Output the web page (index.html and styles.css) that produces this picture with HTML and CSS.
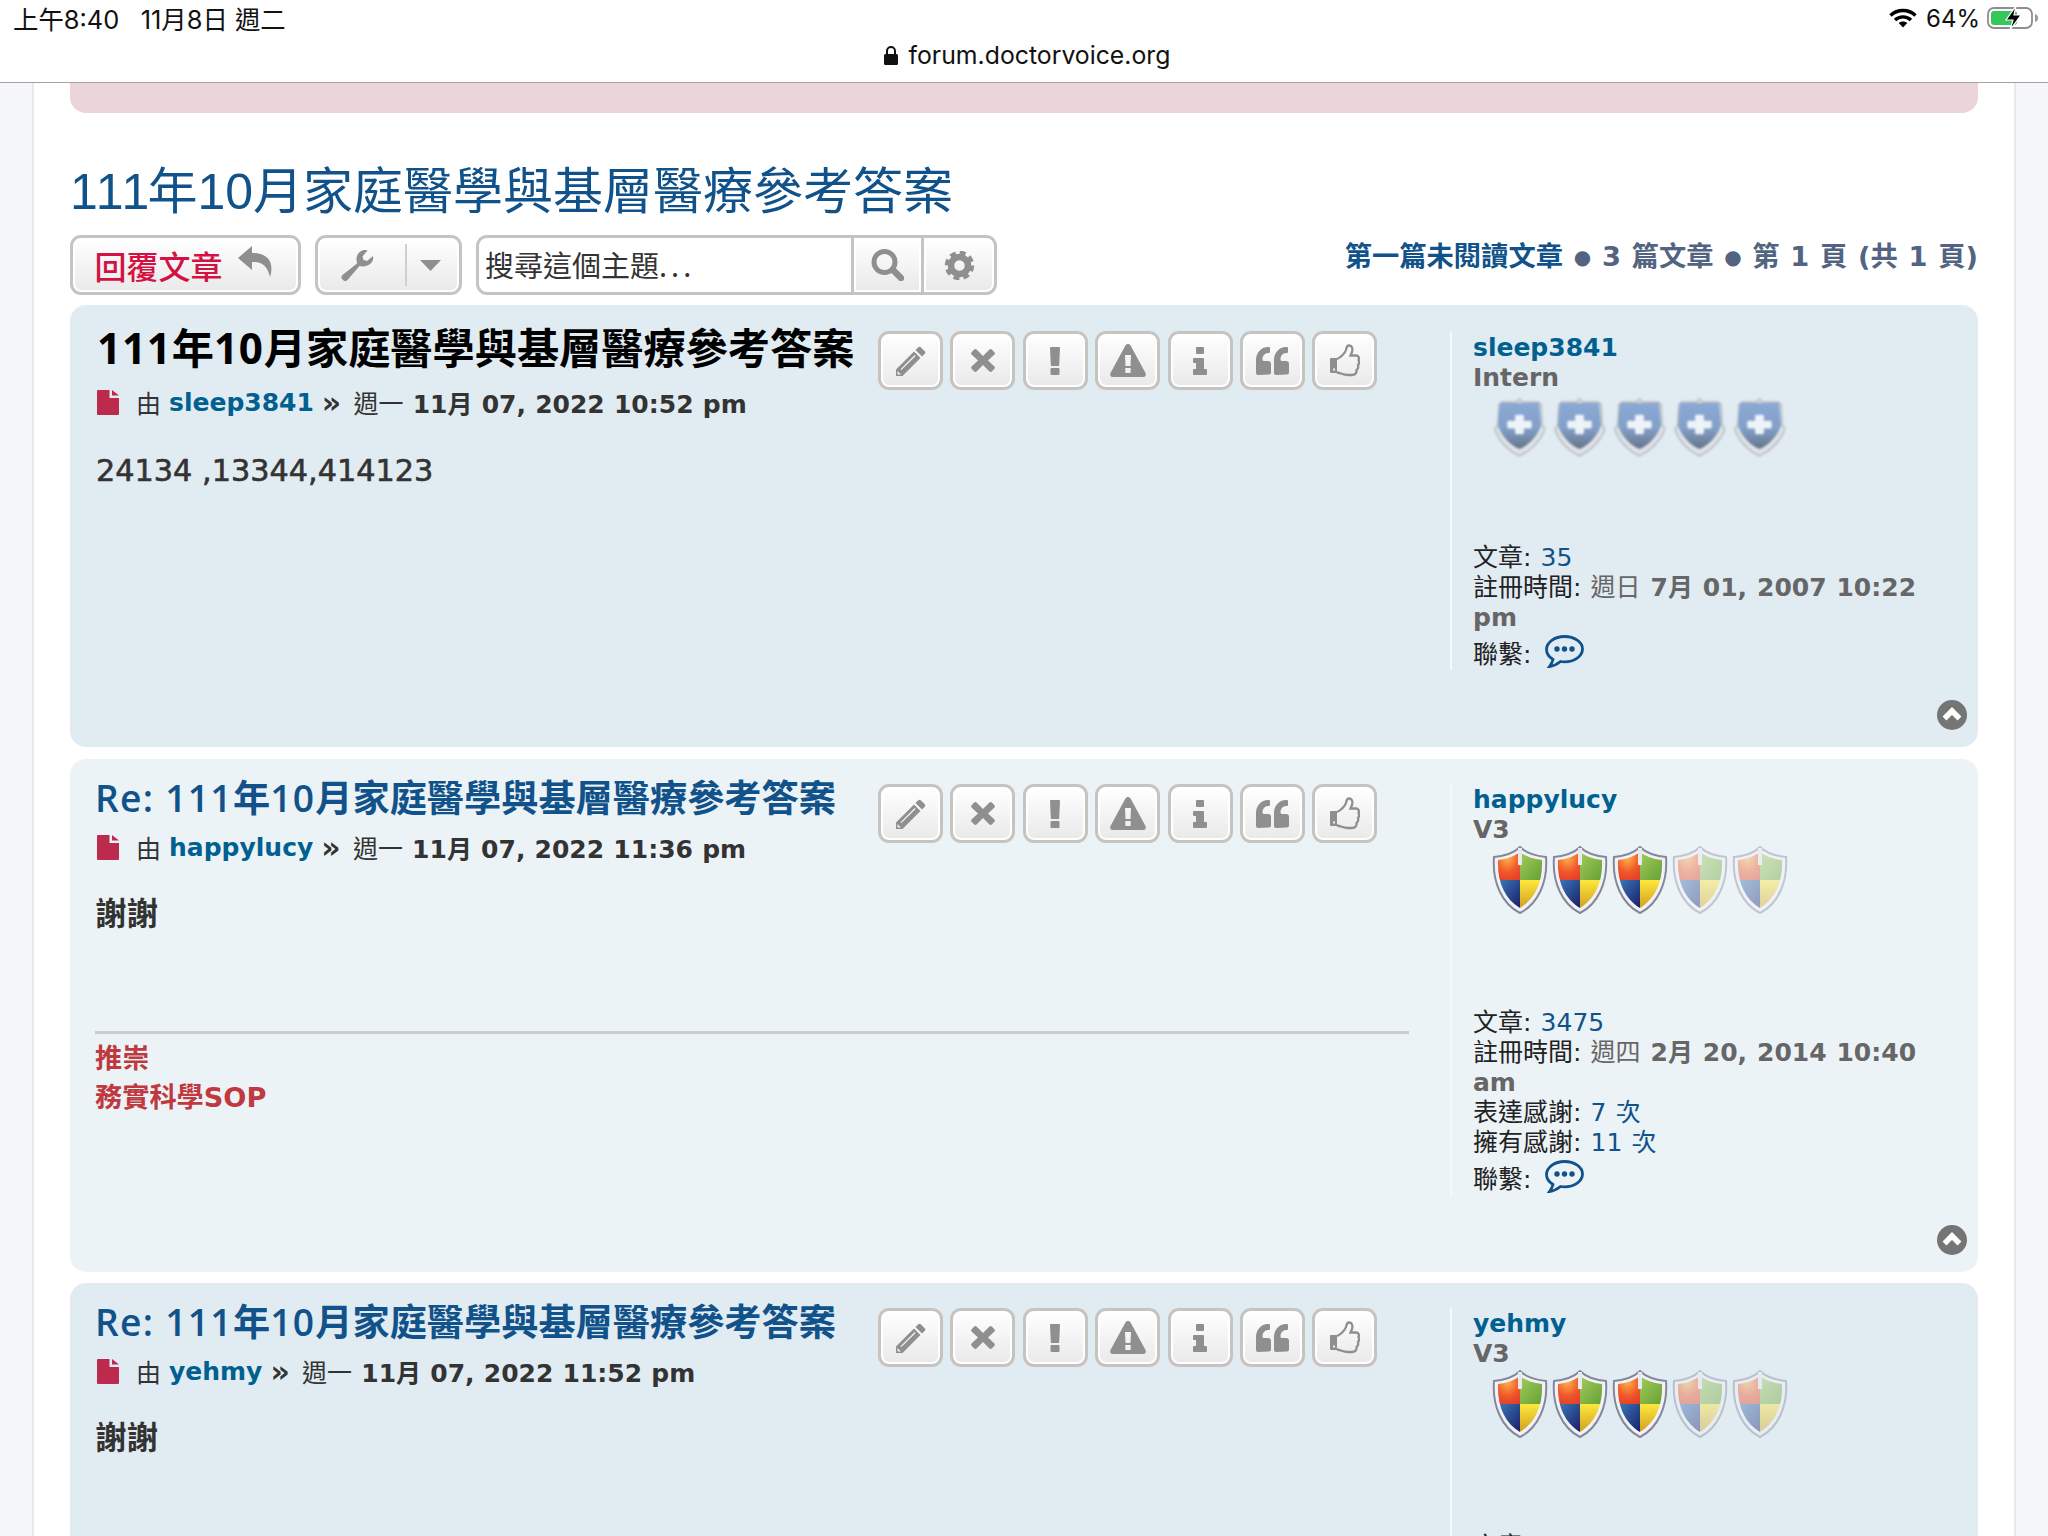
FILE: index.html
```html
<!DOCTYPE html>
<html lang="zh-Hant">
<head>
<meta charset="utf-8">
<title>111年10月家庭醫學與基層醫療參考答案</title>
<link rel="stylesheet" href="styles.css">
</head>
<body>
<svg class="defs" aria-hidden="true">
  <defs>
    <linearGradient id="g-blue" x1="0" y1="0" x2="0" y2="1"><stop offset="0" stop-color="#8aa9d4"/><stop offset=".55" stop-color="#82a0c9"/><stop offset="1" stop-color="#667388"/></linearGradient>
    <radialGradient id="g-red" cx=".55" cy=".35" r=".7"><stop offset="0" stop-color="#fdb04a"/><stop offset=".6" stop-color="#f0582a"/><stop offset="1" stop-color="#e2402a"/></radialGradient>
    <linearGradient id="g-green" x1="0" y1="0" x2="1" y2="1"><stop offset="0" stop-color="#a9d05c"/><stop offset="1" stop-color="#5f9b32"/></linearGradient>
    <linearGradient id="g-navy" x1="0" y1="0" x2="1" y2="1"><stop offset="0" stop-color="#3f85c4"/><stop offset="1" stop-color="#17155f"/></linearGradient>
    <linearGradient id="g-yellow" x1="0" y1="0" x2="0" y2="1"><stop offset="0" stop-color="#fde83c"/><stop offset="1" stop-color="#c9901c"/></linearGradient>
    <clipPath id="c-shield"><path d="M28 6C33 10 41 13 50 14 51 36 43 53 28 62 13 53 5 36 6 14 15 13 23 10 28 6Z"/></clipPath>
    <symbol id="i-pencil" viewBox="0 0 31 30"><path d="M23 1.500a2 2 0 0 1 3 0l3.500 3.500a2 2 0 0 1 0 3L27 10.500 20.500 4z"/><path fill-rule="evenodd" d="M19 5.500l6.500 6.500L7.500 30H1v-6.500zM5.500 23.200l.9.9L20.600 10l-.9-.9zM2.500 25v3.500H6z"/></symbol>
    <symbol id="i-times" viewBox="0 0 24 23"><path d="M3 0.800a2 2 0 0 1 2.800 0L12 7l6.200-6.200a2 2 0 0 1 2.800 0l2.200 2.200a2 2 0 0 1 0 2.800L17 11.500l6.200 5.700a2 2 0 0 1 0 2.800L21 22.200a2 2 0 0 1-2.800 0L12 16l-6.200 6.200a2 2 0 0 1-2.800 0L.8 20a2 2 0 0 1 0-2.800L7 11.500.8 5.800a2 2 0 0 1 0-2.800z"/></symbol>
    <symbol id="i-excl" viewBox="0 0 10 28"><path d="M1 0h8a1 1 0 0 1 1 1l-.8 17a1 1 0 0 1-1 1H1.800a1 1 0 0 1-1-1L0 1a1 1 0 0 1 1-1zM1.500 21h7a1 1 0 0 1 1 1v5a1 1 0 0 1-1 1h-7a1 1 0 0 1-1-1v-5a1 1 0 0 1 1-1z"/></symbol>
    <symbol id="i-warn" viewBox="0 0 36 33"><path fill-rule="evenodd" d="M18 0c1 0 2 .6 2.600 1.600L35.500 29c1 2-.2 4-2.500 4H3c-2.300 0-3.500-2-2.500-4L15.400 1.600C16 .6 17 0 18 0zM15 11l.5 11h5l.5-11zM15.300 24v5h5.400v-5z"/></symbol>
    <symbol id="i-info" viewBox="0 0 14 28"><path d="M4 0h6a1 1 0 0 1 1 1v5a1 1 0 0 1-1 1H4a1 1 0 0 1-1-1V1a1 1 0 0 1 1-1zM1 11h9a1 1 0 0 1 1 1v10h2a1 1 0 0 1 1 1v4a1 1 0 0 1-1 1H1a1 1 0 0 1-1-1v-4a1 1 0 0 1 1-1h2v-6H1a1 1 0 0 1-1-1v-3a1 1 0 0 1 1-1z"/></symbol>
    <symbol id="i-quote" viewBox="0 0 33 28"><path d="M2 28a2 2 0 0 1-2-2V13C0 6 5 0 12 0h1a1 1 0 0 1 1 1v4a1 1 0 0 1-1 1h-1c-3 0-5.500 3-5.500 6v.5c0 .8.700 1.500 1.500 1.500H12a3 3 0 0 1 3 3v8.500a2 2 0 0 1-2 2z"/><path d="M20 28a2 2 0 0 1-2-2V13c0-7 5-13 12-13h1a1 1 0 0 1 1 1v4a1 1 0 0 1-1 1h-1c-3 0-5.500 3-5.500 6v.5c0 .8.700 1.500 1.500 1.500H30a3 3 0 0 1 3 3v8.500a2 2 0 0 1-2 2z"/></symbol>
    <symbol id="i-thumb" viewBox="0 0 30 33"><path fill-rule="evenodd" d="M1 14h6v15H1a1 1 0 0 1-1-1V15a1 1 0 0 1 1-1zM3 24.500v2h2v-2z"/><path class="thumb-line" d="M7 15C11 13.500 15 9 16 6 16.500 3 17 1.500 19 1.500 22 1.500 23 5 22 8L20.500 11.500H26C28.500 11.500 29.500 14 28.500 16 29.500 18 29 20 28 21 28.500 23 28 25 26.500 26 27 29 25 31 22 31H18C14 31 10 29 7 28.500"/></symbol>
    <symbol id="i-reply" viewBox="0 0 35 31"><path d="M14 0 0 12l14 12v-8c10-1 15.500 4 18 15 4-13 0-24-18-24z"/></symbol>
    <symbol id="i-wrench" viewBox="0 0 33 32"><path d="M32 7l-6 5-3.500-1-1-3.500 5-6C20.500-.5 15 5 15.500 11L16 14.500 1.500 26a3 3 0 0 0-.2 4.200l1 1a3 3 0 0 0 4.200-.2L18.500 17C26 19 33.500 14 32 7z"/></symbol>
    <symbol id="i-caret" viewBox="0 0 21 11"><path d="M0 0h21L10.500 11z"/></symbol>
    <symbol id="i-search" viewBox="0 0 33 32"><circle class="glass" cx="13.500" cy="13" r="10.500"/><path class="glass-handle" d="M22 21l8 8"/></symbol>
    <symbol id="i-gear" viewBox="0 0 31 29"><circle class="gear-ring" cx="15.500" cy="14.500" r="8.500"/><circle class="gear-teeth" cx="15.500" cy="14.500" r="12.500"/></symbol>
    <symbol id="i-doc" viewBox="0 0 22 25"><path d="M1 0h11.500v8H22v16a1 1 0 0 1-1 1H1a1 1 0 0 1-1-1V1a1 1 0 0 1 1-1zM15 0l7 5.500h-7z"/></symbol>
    <symbol id="i-chat" viewBox="0 0 39 33"><path class="chat-line" d="M19.500 1.500C9.500 1.500 1.500 7.500 1.500 14.500c0 4 2.500 7.500 6.500 10-.5 2.500-2 5-3.500 7 4-.5 8-2.500 11-5 1.500.3 2.700.4 4 .4 10 0 18-6 18-12.900S29.500 1.500 19.500 1.500z"/><circle cx="12" cy="14" r="2.700"/><circle cx="19.500" cy="14" r="2.700"/><circle cx="27" cy="14" r="2.700"/></symbol>
    <symbol id="i-top" viewBox="0 0 30 30"><circle cx="15" cy="15" r="15"/><path class="top-line" d="M7.500 18.500 15 11l7.500 7.500"/></symbol>
    <symbol id="i-blue" viewBox="0 0 52 60"><path d="M26 1l3 3h16l3 3 1 20 3 5C46 46 36 54 26 59 16 54 6 46 1 32l3-5 1-20 3-3h15z" fill="#dfe3e7" stroke="#b4b7bb" stroke-width="1.500"/><path d="M6 5h40l2 23C44 40 34 49 26 52 18 49 8 40 4 28z" fill="url(#g-blue)"/><path d="M23 17h6a1.500 1.500 0 0 1 1.500 1.500v4.500H37a1.500 1.500 0 0 1 1.500 1.500v5a1.500 1.500 0 0 1-1.500 1.500h-6.500v4.500a1.500 1.500 0 0 1-1.500 1.500h-6a1.500 1.500 0 0 1-1.500-1.500v-4.500H15a1.500 1.500 0 0 1-1.500-1.500v-5a1.500 1.500 0 0 1 1.500-1.500h6.500v-4.500a1.500 1.500 0 0 1 1.500-1.500z" fill="#eef3f8"/></symbol>
    <symbol id="i-win" viewBox="0 0 56 68"><path d="M28 1C34 7 44 10 54 11 56 36 46 58 28 67 10 58 0 36 2 11 12 10 22 7 28 1Z" fill="#f1f2f6" stroke="#85889a" stroke-width="2"/><g clip-path="url(#c-shield)"><rect x="0" y="0" width="28" height="34" fill="url(#g-red)"/><rect x="28" y="0" width="28" height="34" fill="url(#g-green)"/><rect x="0" y="34" width="28" height="34" fill="url(#g-navy)"/><rect x="28" y="34" width="28" height="34" fill="url(#g-yellow)"/></g><path d="M26 2h4v17h-4z" fill="#e8e9ee"/></symbol>
  </defs>
</svg>

<header class="statusbar">
  <div class="status-top">
    <span class="status-time">上午8:40&nbsp;&nbsp; 11月8日 週二</span>
    <span class="status-right">
      <svg class="wifi" viewBox="0 0 28 20"><path d="M1.500 7.500C8.500.8 19.500.8 26.500 7.500M6 12c4.500-4.200 11.500-4.200 16 0"/><path class="wifi-dot" d="M14 19.500l-4.300-4.500c2.400-2 6.200-2 8.600 0z"/></svg>
      <span>64%</span>
      <svg class="battery" viewBox="0 0 52 26"><rect class="bat-shell" x="1" y="3" width="44" height="20" rx="6"/><rect class="bat-fill" x="4" y="6" width="26" height="14" rx="3"/><path class="bat-nub" d="M48 9c2 .5 3 2 3 4s-1 3.500-3 4z"/><path class="bat-bolt" d="M29 1 19 15h7l-3 10 11-15h-7z"/></svg>
    </span>
  </div>
  <div class="status-url">
    <svg class="lock" viewBox="0 0 14 19"><path d="M2 8V5a5 5 0 0 1 10 0v3h.5A1.500 1.500 0 0 1 14 9.500V17.500a1.500 1.500 0 0 1-1.500 1.500h-11A1.500 1.500 0 0 1 0 17.500V9.500A1.500 1.500 0 0 1 1.500 8zM4 8h6V5a3 3 0 0 0-6 0z"/></svg>
    <span>forum.doctorvoice.org</span>
  </div>
</header>

<div class="wrap">
  <div class="notice"></div>
  <h2 class="topic-title"><span class="lat-t">111</span>年10月家庭醫學與基層醫療參考答案</h2>

  <div class="toolbar">
    <div class="tools">
      <a class="btn btn-reply"><span>回覆文章</span><svg class="ic-reply"><use href="#i-reply"/></svg></a>
      <a class="btn btn-tools"><svg class="ic-wrench"><use href="#i-wrench"/></svg><i class="btn-sep"></i><svg class="ic-caret"><use href="#i-caret"/></svg></a>
      <div class="search">
        <span class="search-input">搜尋這個主題<span class="dots">...</span></span>
        <a class="btn btn-search"><svg class="ic-search"><use href="#i-search"/></svg></a>
        <a class="btn btn-gear"><svg class="ic-gear"><use href="#i-gear"/></svg></a>
      </div>
    </div>
    <div class="pagination"><a class="link-strong">第一篇未閱讀文章</a> <span class="bullet">●</span> 3 篇文章 <span class="bullet">●</span> 第 1 頁 (共 1 頁)</div>
  </div>

  <article class="post post-a post-first">
    <div class="post-row">
      <div class="postbody">
        <div class="post-head">
          <div class="post-heading">
            <h3 class="first-title"><span class="lat-b">111</span>年<span class="lat-b">10</span>月家庭醫學與基層醫療參考答案</h3>
            <p class="meta meta-first"><svg class="ic-doc"><use href="#i-doc"/></svg><span class="by">由</span> <a class="uname">sleep3841</a> <b><span class="raquo">»</span> <span class="by">週一</span> 11月 07, 2022 10:52 pm</b></p>
          </div>
          <div class="post-buttons">
            <a class="btn pb"><svg class="ic-pencil"><use href="#i-pencil"/></svg></a>
            <a class="btn pb"><svg class="ic-times"><use href="#i-times"/></svg></a>
            <a class="btn pb"><svg class="ic-excl"><use href="#i-excl"/></svg></a>
            <a class="btn pb"><svg class="ic-warn"><use href="#i-warn"/></svg></a>
            <a class="btn pb"><svg class="ic-info"><use href="#i-info"/></svg></a>
            <a class="btn pb"><svg class="ic-quote"><use href="#i-quote"/></svg></a>
            <a class="btn pb"><svg class="ic-thumb"><use href="#i-thumb"/></svg></a>
          </div>
        </div>
        <div class="content content-num">24134 ,13344,414123</div>
      </div>
      <aside class="profile">
        <a class="uname">sleep3841</a>
        <div class="rank-title">Intern</div>
        <div class="rank rank-blue">
          <svg class="shield-b"><use href="#i-blue"/></svg><svg class="shield-b"><use href="#i-blue"/></svg><svg class="shield-b"><use href="#i-blue"/></svg><svg class="shield-b"><use href="#i-blue"/></svg><svg class="shield-b"><use href="#i-blue"/></svg>
        </div>
        <div class="pf">文章: <a class="val">35</a></div>
        <div class="pf">註冊時間: <b class="muted"><span class="by">週日</span> 7月 01, 2007 10:22 pm</b></div>
        <div class="pf pf-contact">聯繫: <svg class="ic-chat"><use href="#i-chat"/></svg></div>
      </aside>
    </div>
    <div class="back-top"><svg class="ic-top"><use href="#i-top"/></svg></div>
  </article>

  <article class="post post-b">
    <div class="post-row">
      <div class="postbody">
        <div class="post-head">
          <div class="post-heading">
            <h3 class="re-title"><span class="lat">Re: 111</span>年<span class="lat">10</span>月家庭醫學與基層醫療參考答案</h3>
            <p class="meta"><svg class="ic-doc"><use href="#i-doc"/></svg><span class="by">由</span> <a class="uname">happylucy</a> <b><span class="raquo">»</span> <span class="by">週一</span> 11月 07, 2022 11:36 pm</b></p>
          </div>
          <div class="post-buttons">
            <a class="btn pb"><svg class="ic-pencil"><use href="#i-pencil"/></svg></a>
            <a class="btn pb"><svg class="ic-times"><use href="#i-times"/></svg></a>
            <a class="btn pb"><svg class="ic-excl"><use href="#i-excl"/></svg></a>
            <a class="btn pb"><svg class="ic-warn"><use href="#i-warn"/></svg></a>
            <a class="btn pb"><svg class="ic-info"><use href="#i-info"/></svg></a>
            <a class="btn pb"><svg class="ic-quote"><use href="#i-quote"/></svg></a>
            <a class="btn pb"><svg class="ic-thumb"><use href="#i-thumb"/></svg></a>
          </div>
        </div>
        <div class="content content-cjk">謝謝</div>
        <div class="signature">推崇<br>務實科學SOP</div>
      </div>
      <aside class="profile">
        <a class="uname">happylucy</a>
        <div class="rank-title">V3</div>
        <div class="rank rank-win">
          <svg class="shield-w"><use href="#i-win"/></svg><svg class="shield-w"><use href="#i-win"/></svg><svg class="shield-w"><use href="#i-win"/></svg><svg class="shield-w faded"><use href="#i-win"/></svg><svg class="shield-w faded"><use href="#i-win"/></svg>
        </div>
        <div class="pf">文章: <a class="val">3475</a></div>
        <div class="pf">註冊時間: <b class="muted"><span class="by">週四</span> 2月 20, 2014 10:40 am</b></div>
        <div class="pf">表達感謝: <a class="val">7 次</a></div>
        <div class="pf">擁有感謝: <a class="val">11 次</a></div>
        <div class="pf pf-contact">聯繫: <svg class="ic-chat"><use href="#i-chat"/></svg></div>
      </aside>
    </div>
    <div class="back-top"><svg class="ic-top"><use href="#i-top"/></svg></div>
  </article>

  <article class="post post-a">
    <div class="post-row">
      <div class="postbody">
        <div class="post-head">
          <div class="post-heading">
            <h3 class="re-title"><span class="lat">Re: 111</span>年<span class="lat">10</span>月家庭醫學與基層醫療參考答案</h3>
            <p class="meta"><svg class="ic-doc"><use href="#i-doc"/></svg><span class="by">由</span> <a class="uname">yehmy</a> <b><span class="raquo">»</span> <span class="by">週一</span> 11月 07, 2022 11:52 pm</b></p>
          </div>
          <div class="post-buttons">
            <a class="btn pb"><svg class="ic-pencil"><use href="#i-pencil"/></svg></a>
            <a class="btn pb"><svg class="ic-times"><use href="#i-times"/></svg></a>
            <a class="btn pb"><svg class="ic-excl"><use href="#i-excl"/></svg></a>
            <a class="btn pb"><svg class="ic-warn"><use href="#i-warn"/></svg></a>
            <a class="btn pb"><svg class="ic-info"><use href="#i-info"/></svg></a>
            <a class="btn pb"><svg class="ic-quote"><use href="#i-quote"/></svg></a>
            <a class="btn pb"><svg class="ic-thumb"><use href="#i-thumb"/></svg></a>
          </div>
        </div>
        <div class="content content-cjk">謝謝</div>
      </div>
      <aside class="profile">
        <a class="uname">yehmy</a>
        <div class="rank-title">V3</div>
        <div class="rank rank-win">
          <svg class="shield-w"><use href="#i-win"/></svg><svg class="shield-w"><use href="#i-win"/></svg><svg class="shield-w"><use href="#i-win"/></svg><svg class="shield-w faded"><use href="#i-win"/></svg><svg class="shield-w faded"><use href="#i-win"/></svg>
        </div>
        <div class="pf">文章: <a class="val">2210</a></div>
      </aside>
    </div>
  </article>
</div>
</body>
</html>
```
FILE: styles.css
```css
* { box-sizing: border-box; }
html, body { margin: 0; padding: 0; height: 1536px; overflow: hidden; }
body {
  background: #f5f7fb;
  color: #333;
  font-family: "DejaVu Sans", "Noto Sans CJK TC", sans-serif;
  font-size: 25px;
}
a { color: inherit; text-decoration: none; }
h2, h3, p { margin: 0; font-weight: normal; }
.defs { display: block; width: 0; height: 0; overflow: hidden; }

/* iOS status bar */
.statusbar {
  height: 83px;
  background: #fefefe;
  border-bottom: 1px solid #a99f9f;
  font-family: Inter, "Noto Sans CJK TC", sans-serif;
  color: #111;
}
.status-top {
  display: flex;
  justify-content: space-between;
  align-items: center;
  height: 36px;
  padding: 0 9px 0 13px;
  font-size: 24px;
}
.status-time { white-space: nowrap; font-size: 25.400px; }
.status-right { display: flex; align-items: center; gap: 9px; }
.wifi { width: 28px; height: 20px; fill: none; stroke: #000; stroke-width: 3.400; }
.wifi-dot { fill: #000; stroke: none; }
.battery { width: 52px; height: 26px; margin-left: -2px; }
.bat-shell { fill: #fff; stroke: #8e8e8e; stroke-width: 1.800; }
.bat-fill { fill: #34c759; }
.bat-nub { fill: #9a9a9a; }
.bat-bolt { fill: #000; stroke: #fff; stroke-width: 1.200; }
.status-url {
  display: flex;
  justify-content: center;
  align-items: center;
  gap: 11px;
  height: 38px;
  font-size: 24.800px;
  padding-left: 6px;
}
.lock { width: 14px; height: 19px; fill: #111; fill-rule: evenodd; }

/* page wrap */
.wrap {
  margin: 0 32px;
  height: 1453px;
  padding: 0 36px;
  background: #fff;
  border-left: 2px solid #e6e9f0;
  border-right: 2px solid #e6e9f0;
  overflow: hidden;
}
.notice {
  height: 30px;
  background: #ecd5d8;
  border-radius: 0 0 16px 16px;
}
.topic-title {
  margin-top: 49px;
  height: 60px;
  line-height: 60px;
  font-family: "Liberation Sans", "Noto Sans CJK TC", sans-serif;
  font-size: 50px;
  color: #105289;
  white-space: nowrap;
}
.lat-t { font-kerning: none; letter-spacing: -2px; }

/* toolbar */
.toolbar {
  display: flex;
  justify-content: space-between;
  align-items: flex-start;
  margin: 13px 0 10px;
  height: 60px;
}
.tools { display: flex; gap: 14px; }
.btn {
  display: flex;
  align-items: center;
  justify-content: center;
  border: 3px solid #c7c3bf;
  border-radius: 11px;
  background: linear-gradient(#fff, #e9e9e9);
  box-shadow: inset 0 0 0 2px #fff;
  fill: #8f8f8f;
}
.btn-reply {
  width: 231px;
  height: 60px;
  gap: 15px;
  padding-right: 4px;
  color: #d31145;
  font-family: "Noto Sans CJK TC", sans-serif;
  font-size: 32px;
  font-weight: 500;
}
.ic-reply { width: 35px; height: 31px; margin-top: -7px; }
.btn-tools { width: 147px; height: 60px; }
.ic-wrench { width: 33px; height: 32px; margin-left: 5px; }
.btn-sep { width: 2px; height: 42px; margin: 0 13px 0 31px; background: #cfcfcf; }
.ic-caret { width: 21px; height: 11px; }
.search { display: flex; height: 60px; }
.search-input {
  width: 375px;
  padding-left: 6px;
  line-height: 52px;
  font-size: 29px;
  color: #333;
  background: #fff;
  border: 3px solid #c7c3bf;
  border-right: 0;
  border-radius: 11px 0 0 11px;
  font-family: "Noto Sans CJK TC", sans-serif;
}
.dots { letter-spacing: 4px; }
.btn-search { width: 73px; border-radius: 0; }
.btn-gear { width: 73px; border-left: 0; border-radius: 0 11px 11px 0; }
.ic-search { width: 33px; height: 32px; }
.glass { fill: none; stroke: #8f8f8f; stroke-width: 5; }
.glass-handle { fill: none; stroke: #8f8f8f; stroke-width: 6.500; stroke-linecap: round; }
.ic-gear { width: 31px; height: 29px; }
.gear-ring { fill: none; stroke: #8f8f8f; stroke-width: 6.500; }
.gear-teeth { fill: none; stroke: #8f8f8f; stroke-width: 4.500; stroke-dasharray: 5.800 4; }
.pagination {
  line-height: 44px;
  font-size: 27.300px;
  font-weight: 700;
  word-spacing: 1.200px;
  color: #536482;
  white-space: nowrap;
}
.link-strong { color: #105289; }
.bullet { font-size: 20px; vertical-align: 2px; }

/* posts */
.post { border-radius: 16px; padding: 15px 25px 16px; margin-bottom: 11px; }
.post-first { margin-bottom: 12px; }
.post-a { background: #e1ebf2; }
.post-b { background: #ecf3f7; }
.post-row { display: flex; align-items: flex-start; }
.postbody { width: 1314px; flex: none; }
.post-head { display: flex; }
.post-heading { width: 783px; flex: none; }
.first-title {
  height: 54px;
  line-height: 56px;
  padding-left: 2px;
  font-family: "Open Sans", "Noto Sans CJK TC", sans-serif;
  font-size: 42.200px;
  font-weight: 700;
  color: #000;
  white-space: nowrap;
}
.lat-b { letter-spacing: .8px; }
.re-title {
  height: 48px;
  line-height: 48px;
  font-family: "Open Sans", "Noto Sans CJK TC", sans-serif;
  font-size: 37.200px;
  font-weight: 600;
  color: #105289;
  white-space: nowrap;
}
.lat { letter-spacing: 1.300px; }
.meta {
  display: flex;
  align-items: center;
  gap: 8px;
  margin-top: 10px;
  height: 30px;
  font-size: 25px;
  white-space: pre;
}
.meta-first { margin-top: 13px; }
.meta b { font-weight: 700; word-spacing: .5px; }
.raquo { font-size: 30px; line-height: 20px; margin-right: 3px; }
.by { font-weight: 400; }
.ic-doc { width: 22px; height: 25px; fill: #bc2a4d; margin: 0 9px 0 2px; flex: none; }
.uname { font-weight: 700; color: #00608f; }
.post-buttons { display: flex; gap: 7.400px; padding-top: 11px; }
.post-b .post-buttons, .post-a:not(.post-first) .post-buttons { padding-top: 10px; }
.pb { width: 65px; height: 59px; }
.ic-pencil { width: 31px; height: 30px; }
.ic-times { width: 24px; height: 23px; }
.ic-excl { width: 10px; height: 28px; }
.ic-warn { width: 36px; height: 33px; }
.ic-info { width: 14px; height: 28px; }
.ic-quote { width: 33px; height: 28px; }
.ic-thumb { width: 30px; height: 33px; }
.thumb-line { fill: none; stroke: #8f8f8f; stroke-width: 2.300; }
.content {
  margin: 30px 0 0 1px;
  height: 40px;
  line-height: 40px;
  font-size: 30.300px;
  color: #333;
}
.post-first .content { margin-top: 34px; }
.content-num { -webkit-text-stroke: .6px #333; }
.content-cjk { font-size: 31.500px; font-weight: 700; margin-top: 32px; margin-left: 0; }
.signature {
  margin-top: 97px;
  border-top: 3px solid #cccccc;
  padding-top: 5px;
  font-size: 27.200px;
  line-height: 39px;
  font-weight: 700;
  color: #c0393f;
}

/* profile */
.profile {
  flex: none;
  width: 480px;
  margin: 9px 0 0 41px;
  padding: 2px 0 0 21px;
  border-left: 2px solid #f5f9fb;
  font-size: 25px;
  line-height: 30px;
}
.post-first .profile { margin-top: 11px; }
.profile .uname { display: block; height: 30px; }
.rank-title { height: 30px; font-weight: 700; color: #666; }
.rank { display: flex; padding-left: 18px; }
.rank-blue { height: 150px; padding-top: 5px; padding-left: 21px; gap: 9px; align-items: flex-start; }
.rank-win { height: 163px; padding-top: 1px; gap: 4px; padding-left: 19px; align-items: flex-start; }
.shield-b { width: 51px; height: 59px; filter: blur(1px); }
.shield-w { width: 56px; height: 68px; filter: blur(.6px); }
.faded { opacity: .42; }
.pf { color: #222; word-spacing: 1.200px; }
.val { color: #105289; }
.muted { color: #666; font-weight: 700; }
.pf-contact { display: flex; align-items: center; gap: 10px; height: 37px; padding-top: 7px; white-space: pre; }
.ic-chat { width: 39px; height: 33px; fill: #105289; margin-top: -7px; margin-left: -6px; }
.chat-line { fill: none; stroke: #105289; stroke-width: 2.800; }
.back-top { display: flex; justify-content: flex-end; padding: 30px 0 0 0; height: 61px; }
.ic-top { width: 30px; height: 30px; fill: #757575; margin-right: -14px; }
.top-line { fill: none; stroke: #fff; stroke-width: 5.500; stroke-linejoin: miter; }
```
